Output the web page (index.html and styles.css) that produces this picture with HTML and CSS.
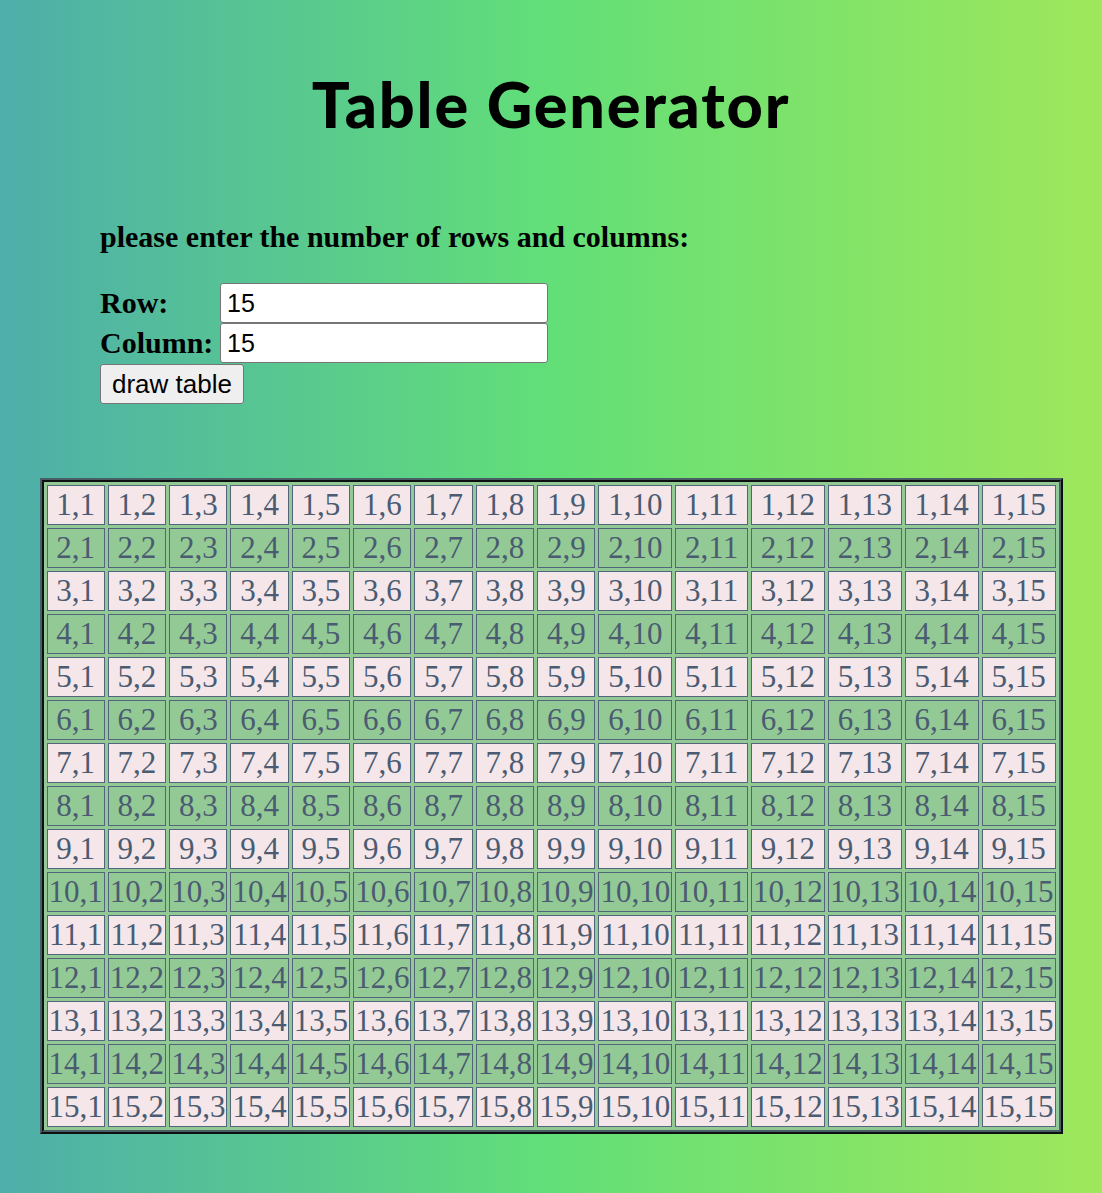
FILE: index.html
```html
<!DOCTYPE html>
<html lang="en">
<head>
<meta charset="utf-8">
<title>Table Generator</title>
<link rel="stylesheet" href="styles.css">
</head>
<body>
<h1 class="title">Table Generator</h1>
<section class="form">
  <h2 class="prompt">please enter the number of rows and columns:</h2>
  <div class="fields">
    <label class="label" for="row">Row:</label>
    <input class="field" id="row" type="text" value="15">
    <label class="label" for="col">Column:</label>
    <input class="field" id="col" type="text" value="15">
  </div>
  <button class="draw" type="button">draw table</button>
</section>
<div class="table-wrap">
<table class="grid">
<tr class="odd"><td>1,1</td><td>1,2</td><td>1,3</td><td>1,4</td><td>1,5</td><td>1,6</td><td>1,7</td><td>1,8</td><td>1,9</td><td>1,10</td><td>1,11</td><td>1,12</td><td>1,13</td><td>1,14</td><td>1,15</td></tr>
<tr class="even"><td>2,1</td><td>2,2</td><td>2,3</td><td>2,4</td><td>2,5</td><td>2,6</td><td>2,7</td><td>2,8</td><td>2,9</td><td>2,10</td><td>2,11</td><td>2,12</td><td>2,13</td><td>2,14</td><td>2,15</td></tr>
<tr class="odd"><td>3,1</td><td>3,2</td><td>3,3</td><td>3,4</td><td>3,5</td><td>3,6</td><td>3,7</td><td>3,8</td><td>3,9</td><td>3,10</td><td>3,11</td><td>3,12</td><td>3,13</td><td>3,14</td><td>3,15</td></tr>
<tr class="even"><td>4,1</td><td>4,2</td><td>4,3</td><td>4,4</td><td>4,5</td><td>4,6</td><td>4,7</td><td>4,8</td><td>4,9</td><td>4,10</td><td>4,11</td><td>4,12</td><td>4,13</td><td>4,14</td><td>4,15</td></tr>
<tr class="odd"><td>5,1</td><td>5,2</td><td>5,3</td><td>5,4</td><td>5,5</td><td>5,6</td><td>5,7</td><td>5,8</td><td>5,9</td><td>5,10</td><td>5,11</td><td>5,12</td><td>5,13</td><td>5,14</td><td>5,15</td></tr>
<tr class="even"><td>6,1</td><td>6,2</td><td>6,3</td><td>6,4</td><td>6,5</td><td>6,6</td><td>6,7</td><td>6,8</td><td>6,9</td><td>6,10</td><td>6,11</td><td>6,12</td><td>6,13</td><td>6,14</td><td>6,15</td></tr>
<tr class="odd"><td>7,1</td><td>7,2</td><td>7,3</td><td>7,4</td><td>7,5</td><td>7,6</td><td>7,7</td><td>7,8</td><td>7,9</td><td>7,10</td><td>7,11</td><td>7,12</td><td>7,13</td><td>7,14</td><td>7,15</td></tr>
<tr class="even"><td>8,1</td><td>8,2</td><td>8,3</td><td>8,4</td><td>8,5</td><td>8,6</td><td>8,7</td><td>8,8</td><td>8,9</td><td>8,10</td><td>8,11</td><td>8,12</td><td>8,13</td><td>8,14</td><td>8,15</td></tr>
<tr class="odd"><td>9,1</td><td>9,2</td><td>9,3</td><td>9,4</td><td>9,5</td><td>9,6</td><td>9,7</td><td>9,8</td><td>9,9</td><td>9,10</td><td>9,11</td><td>9,12</td><td>9,13</td><td>9,14</td><td>9,15</td></tr>
<tr class="even"><td>10,1</td><td>10,2</td><td>10,3</td><td>10,4</td><td>10,5</td><td>10,6</td><td>10,7</td><td>10,8</td><td>10,9</td><td>10,10</td><td>10,11</td><td>10,12</td><td>10,13</td><td>10,14</td><td>10,15</td></tr>
<tr class="odd"><td>11,1</td><td>11,2</td><td>11,3</td><td>11,4</td><td>11,5</td><td>11,6</td><td>11,7</td><td>11,8</td><td>11,9</td><td>11,10</td><td>11,11</td><td>11,12</td><td>11,13</td><td>11,14</td><td>11,15</td></tr>
<tr class="even"><td>12,1</td><td>12,2</td><td>12,3</td><td>12,4</td><td>12,5</td><td>12,6</td><td>12,7</td><td>12,8</td><td>12,9</td><td>12,10</td><td>12,11</td><td>12,12</td><td>12,13</td><td>12,14</td><td>12,15</td></tr>
<tr class="odd"><td>13,1</td><td>13,2</td><td>13,3</td><td>13,4</td><td>13,5</td><td>13,6</td><td>13,7</td><td>13,8</td><td>13,9</td><td>13,10</td><td>13,11</td><td>13,12</td><td>13,13</td><td>13,14</td><td>13,15</td></tr>
<tr class="even"><td>14,1</td><td>14,2</td><td>14,3</td><td>14,4</td><td>14,5</td><td>14,6</td><td>14,7</td><td>14,8</td><td>14,9</td><td>14,10</td><td>14,11</td><td>14,12</td><td>14,13</td><td>14,14</td><td>14,15</td></tr>
<tr class="odd"><td>15,1</td><td>15,2</td><td>15,3</td><td>15,4</td><td>15,5</td><td>15,6</td><td>15,7</td><td>15,8</td><td>15,9</td><td>15,10</td><td>15,11</td><td>15,12</td><td>15,13</td><td>15,14</td><td>15,15</td></tr>
</table>
</div>
</body>
</html>
```
FILE: styles.css
```css
html {
  min-height: 100%;
  background: linear-gradient(90deg, #4eaeaa 0%, #62df78 50%, #9fe75b 100%);
}
body {
  margin: 0;
  min-height: 1193px;
  font-family: "Liberation Serif", serif;
  color: #000;
}
.title {
  margin: 0;
  padding-top: 67px;
  height: 74px;
  line-height: 74px;
  text-align: center;
  font-family: "Comic Sans MS", "Lato", sans-serif;
  font-weight: 900;
  font-size: 63px;
  letter-spacing: 1.8px;
}
.form {
  padding-left: 100px;
  margin-top: 81px;
}
.prompt {
  margin: 0;
  font-size: 30px;
  font-weight: bold;
  line-height: 30px;
}
.fields {
  margin-top: 31px;
  display: grid;
  grid-template-columns: 120px 328px;
  grid-auto-rows: 40px;
  align-items: center;
}
.label {
  font-size: 30px;
  font-weight: bold;
}
.field {
  box-sizing: border-box;
  width: 328px;
  height: 40px;
  margin: 0;
  padding: 1px 6px;
  border: 1px solid #767676;
  border-radius: 3px;
  background: #fff;
  font-family: "Liberation Sans", Arial, sans-serif;
  font-size: 25px;
  color: #000;
}
.draw {
  display: block;
  box-sizing: border-box;
  margin-top: 1px;
  height: 40px;
  padding: 1px 11px;
  border: 1px solid #767676;
  border-radius: 3px;
  background: #efefef;
  font-family: "Liberation Sans", Arial, sans-serif;
  font-size: 26px;
  color: #000;
}
.table-wrap {
  margin-top: 74px;
  display: flex;
  justify-content: center;
}
.grid {
  width: 1023px;
  border: 4px ridge #4a5e66;
  border-spacing: 3px;
  background: #93c994;
}
.grid td {
  border: 1px solid #52657a;
  padding: 1px;
  text-align: center;
  font-size: 31px;
  line-height: 36px;
  color: #4a5b72;
  white-space: nowrap;
}
.grid .odd td {
  background: #f4e6e9;
}
.grid .even td {
  background: #93c994;
}
```
